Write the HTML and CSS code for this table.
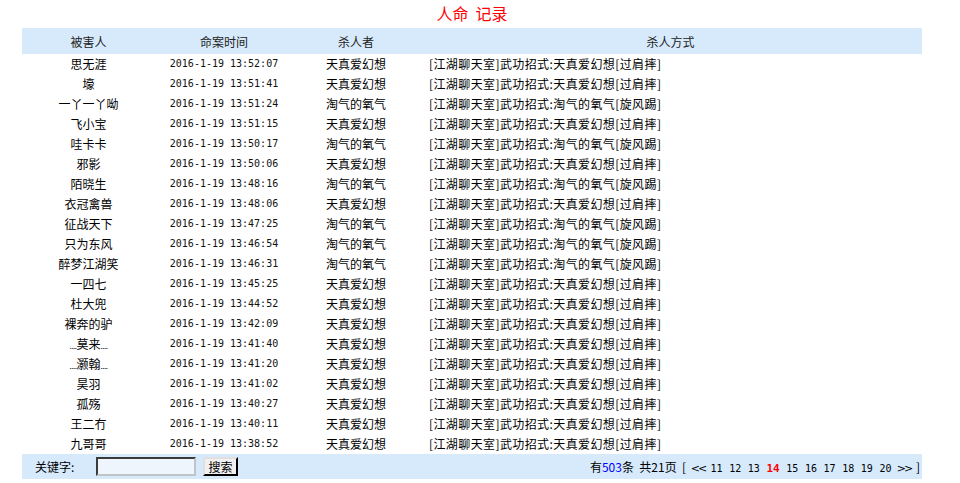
FILE: index.html
```html
<!DOCTYPE html>
<html lang="zh-CN">
<head>
<meta charset="utf-8">
<title>人命 记录</title>
<link rel="stylesheet" href="styles.css">
</head>
<body>
<div class="wrap">
  <h1 class="title">人命&nbsp;&nbsp;记录</h1>
  <table class="log">
    <colgroup>
      <col class="c1"><col class="c2"><col class="c3"><col class="c4">
    </colgroup>
    <thead>
      <tr><th>被害人</th><th>命案时间</th><th>杀人者</th><th>杀人方式</th></tr>
    </thead>
    <tbody>
      <tr><td>思无涯</td><td class="t">2016-1-19 13:52:07</td><td>天真爱幻想</td><td class="m">[江湖聊天室]武功招式:天真爱幻想[过肩摔]</td></tr>
      <tr><td>壕</td><td class="t">2016-1-19 13:51:41</td><td>天真爱幻想</td><td class="m">[江湖聊天室]武功招式:天真爱幻想[过肩摔]</td></tr>
      <tr><td>一丫一丫呦</td><td class="t">2016-1-19 13:51:24</td><td>淘气的氧气</td><td class="m">[江湖聊天室]武功招式:淘气的氧气[旋风踢]</td></tr>
      <tr><td>飞小宝</td><td class="t">2016-1-19 13:51:15</td><td>天真爱幻想</td><td class="m">[江湖聊天室]武功招式:天真爱幻想[过肩摔]</td></tr>
      <tr><td>哇卡卡</td><td class="t">2016-1-19 13:50:17</td><td>淘气的氧气</td><td class="m">[江湖聊天室]武功招式:淘气的氧气[旋风踢]</td></tr>
      <tr><td>邪影</td><td class="t">2016-1-19 13:50:06</td><td>天真爱幻想</td><td class="m">[江湖聊天室]武功招式:天真爱幻想[过肩摔]</td></tr>
      <tr><td>陌晓生</td><td class="t">2016-1-19 13:48:16</td><td>淘气的氧气</td><td class="m">[江湖聊天室]武功招式:淘气的氧气[旋风踢]</td></tr>
      <tr><td>衣冠禽兽</td><td class="t">2016-1-19 13:48:06</td><td>天真爱幻想</td><td class="m">[江湖聊天室]武功招式:天真爱幻想[过肩摔]</td></tr>
      <tr><td>征战天下</td><td class="t">2016-1-19 13:47:25</td><td>淘气的氧气</td><td class="m">[江湖聊天室]武功招式:淘气的氧气[旋风踢]</td></tr>
      <tr><td>只为东风</td><td class="t">2016-1-19 13:46:54</td><td>淘气的氧气</td><td class="m">[江湖聊天室]武功招式:淘气的氧气[旋风踢]</td></tr>
      <tr><td>醉梦江湖笑</td><td class="t">2016-1-19 13:46:31</td><td>淘气的氧气</td><td class="m">[江湖聊天室]武功招式:淘气的氧气[旋风踢]</td></tr>
      <tr><td>一四七</td><td class="t">2016-1-19 13:45:25</td><td>天真爱幻想</td><td class="m">[江湖聊天室]武功招式:天真爱幻想[过肩摔]</td></tr>
      <tr><td>杜大兜</td><td class="t">2016-1-19 13:44:52</td><td>天真爱幻想</td><td class="m">[江湖聊天室]武功招式:天真爱幻想[过肩摔]</td></tr>
      <tr><td>裸奔的驴</td><td class="t">2016-1-19 13:42:09</td><td>天真爱幻想</td><td class="m">[江湖聊天室]武功招式:天真爱幻想[过肩摔]</td></tr>
      <tr><td><span class="dots">....</span>莫来<span class="dots">....</span></td><td class="t">2016-1-19 13:41:40</td><td>天真爱幻想</td><td class="m">[江湖聊天室]武功招式:天真爱幻想[过肩摔]</td></tr>
      <tr><td><span class="dots">....</span>灏翰<span class="dots">....</span></td><td class="t">2016-1-19 13:41:20</td><td>天真爱幻想</td><td class="m">[江湖聊天室]武功招式:天真爱幻想[过肩摔]</td></tr>
      <tr><td>昊羽</td><td class="t">2016-1-19 13:41:02</td><td>天真爱幻想</td><td class="m">[江湖聊天室]武功招式:天真爱幻想[过肩摔]</td></tr>
      <tr><td>孤殇</td><td class="t">2016-1-19 13:40:27</td><td>天真爱幻想</td><td class="m">[江湖聊天室]武功招式:天真爱幻想[过肩摔]</td></tr>
      <tr><td>王二冇</td><td class="t">2016-1-19 13:40:11</td><td>天真爱幻想</td><td class="m">[江湖聊天室]武功招式:天真爱幻想[过肩摔]</td></tr>
      <tr><td>九哥哥</td><td class="t">2016-1-19 13:38:52</td><td>天真爱幻想</td><td class="m">[江湖聊天室]武功招式:天真爱幻想[过肩摔]</td></tr>
    </tbody>
  </table>
  <div class="bar">
    <form class="search">
      <label class="kw">关键字:</label>
      <input class="box" type="text">
      <button class="btn" type="button">搜索</button>
    </form>
    <div class="pager">
      有<span class="num">503</span>条&nbsp;&nbsp;共21页&nbsp;&nbsp;[&nbsp;<a class="pg arr">&lt;&lt;</a><a class="pg">11</a><a class="pg">12</a><a class="pg">13</a><a class="pg cur">14</a><a class="pg">15</a><a class="pg">16</a><a class="pg">17</a><a class="pg">18</a><a class="pg">19</a><a class="pg">20</a><a class="pg arr">&gt;&gt;</a>&nbsp;]
    </div>
  </div>
</div>
</body>
</html>
```

FILE: styles.css
```css
html, body {
  margin: 0;
  padding: 0;
  background: #fff;
}
body {
  font-family: "Noto Sans CJK SC", "Noto Sans", sans-serif;
  font-size: 12px;
  color: #000;
}
.wrap {
  width: 900px;
  margin-left: 22px;
}
.title {
  margin: 0;
  height: 28px;
  line-height: 27px;
  font-size: 16px;
  font-weight: normal;
  color: #ff0000;
  text-align: center;
}
.log {
  width: 900px;
  border-collapse: collapse;
  table-layout: fixed;
}
.c1 { width: 133px; }
.c2 { width: 138px; }
.c3 { width: 126px; }
.c4 { width: 503px; }
.log th {
  height: 26px;
  padding: 0;
  background: #d6eafc;
  font-weight: normal;
  color: #222;
  text-align: center;
}
.log tbody tr {
  height: 20px;
}
.log td {
  height: 20px;
  padding: 0;
  text-align: center;
  white-space: nowrap;
  line-height: 20px;
  overflow: hidden;
}
.log td.t {
  font-family: "DejaVu Sans Mono", "Noto Sans CJK SC", monospace;
  font-size: 10px;
  color: #111;
}
.log td.m {
  text-align: left;
  padding-left: 10px;
  letter-spacing: 0.4px;
}
.dots {
  font-size: 8px;
  line-height: 0;
  letter-spacing: -0.5px;
}
.bar {
  height: 25px;
  background: #d6eafc;
  display: flex;
  align-items: center;
  justify-content: space-between;
}
.search {
  display: flex;
  align-items: center;
  margin: 0;
  padding-left: 13px;
}
.kw {
  width: 61px;
}
.box {
  width: 96px;
  height: 15px;
  padding: 0;
  margin: 0;
  border: 2px inset #bfc4c8;
  border-top-color: #8e8f8f;
  border-left-color: #8e8f8f;
  background: #eef5fd;
}
.btn {
  margin-left: 7px;
  width: 35px;
  height: 19px;
  padding: 0;
  font-family: "Noto Sans CJK SC", sans-serif;
  font-size: 12px;
  line-height: 13px;
  background: #f0f0f0;
  border: 2px outset #e0e0e0;
  border-right-color: #404040;
  border-bottom-color: #404040;
  color: #000;
}
.pager {
  padding-right: 2px;
  white-space: nowrap;
}
.num {
  color: #0000ff;
}
.pg {
  display: inline-block;
  margin: 0 3.3px;
  color: #000;
  font-family: "DejaVu Sans Mono", monospace;
  font-size: 10px;
}
.arr {
  margin: 0 2px;
  letter-spacing: -2px;
  font-family: "DejaVu Sans", sans-serif;
  font-size: 11px;
}
.cur {
  color: #ff0000;
  font-weight: bold;
  font-size: 11px;
}
```
